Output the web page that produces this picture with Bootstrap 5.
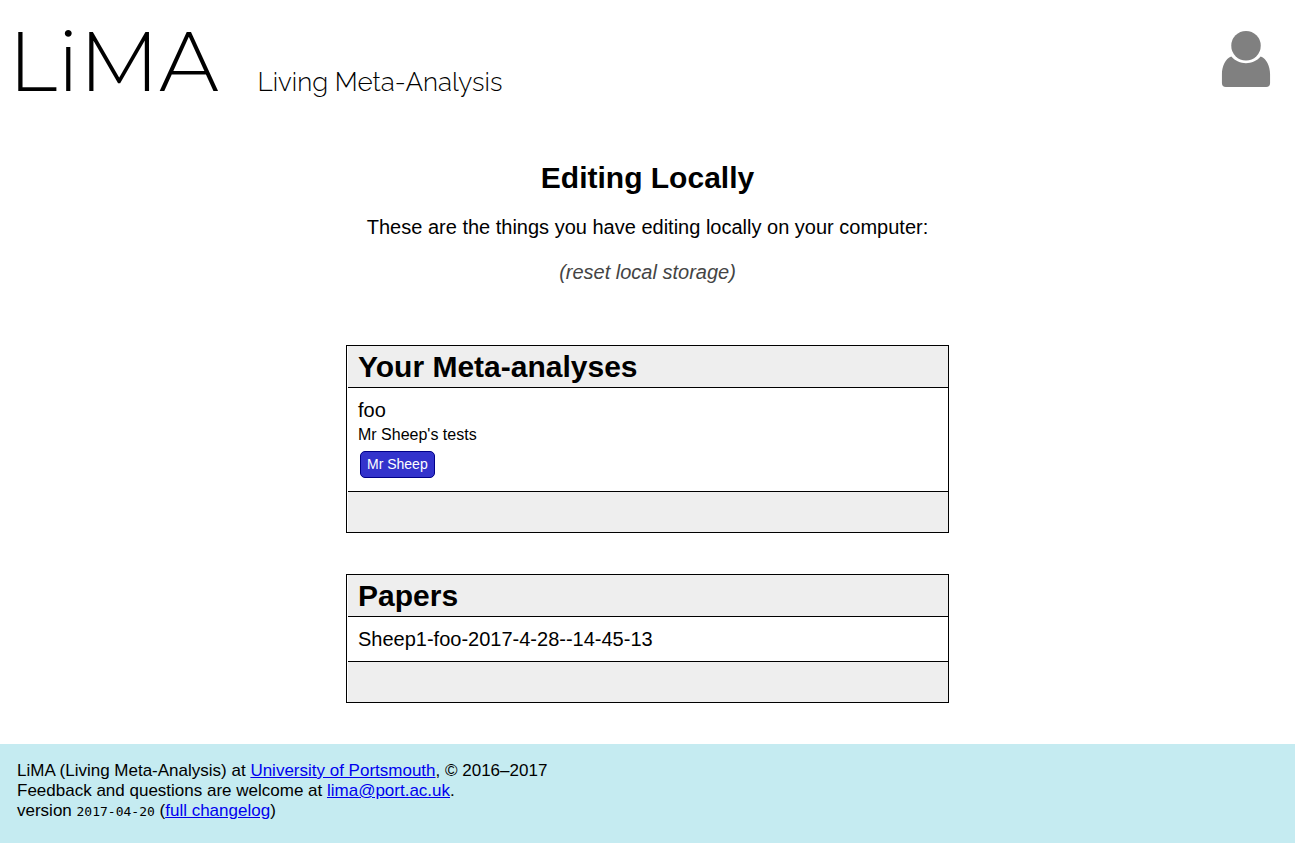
<!DOCTYPE html>
<html lang="en">
<head>
<meta charset="utf-8">
<meta name="viewport" content="width=device-width, initial-scale=1">
<title>LiMA: Editing Locally</title>
<link href="https://cdn.jsdelivr.net/npm/bootstrap@5.3.0/dist/css/bootstrap.min.css" rel="stylesheet">
<style>
body { font-family: "Liberation Sans", Arial, sans-serif; font-size: 20px; line-height: 24px; color: #000; }
h1, h2 { font-size: 30px; line-height: 36px; font-weight: 700; }
.site-header { padding: 13px 24px 0 8px; }
.site-logo { font: 300 84px/96px Montserrat, Lato, sans-serif; }
.brand { gap: 39px; }
.tagline { font: 300 26px/32px Raleway, Lato, sans-serif; }
.user-button { margin-top: 18px; }
.user-button svg { display: block; width: 50px; height: 56px; }
.intro { margin-top: 51px; }
.intro h1 { margin-bottom: 19px; }
.intro p { margin-bottom: 21px; }
.reset { color: #444; }
.lists { max-width: 603px; margin-top: 61px; gap: 41px; }
.listing { border: 1px solid #000; padding: 0 0 0 1px; }
.listing header { background: #eee; border-bottom: 1px solid #000; padding: 3px 10px 2px; }
.listing footer { background: #eee; border-top: 1px solid #000; height: 41px; }
.listing a { color: #000; }
.entry { padding: 10px; }
.about { font-size: 16px; line-height: 26px; }
.tag { font-size: 14px; line-height: 17px; color: #fff; background: #33c; border: 1px solid #008; border-radius: 5px; padding: 4px 6px; margin: 3px 2px; }
.site-footer { background: #c5ebf1; margin-top: 41px; padding: 17px 17px 22px; font-size: 17px; line-height: 20px; }
.site-footer a { color: #00e; }
.version { font: 13px/16px "DejaVu Sans Mono", monospace; }
</style>
</head>
<body>
<header class="site-header d-flex justify-content-between align-items-start">
  <div class="brand d-flex align-items-baseline">
    <a class="site-logo text-black text-decoration-none" href="#">LiMA</a>
    <span class="tagline">Living Meta-Analysis</span>
  </div>
  <button class="user-button btn p-0 border-0" type="button" aria-label="Account">
    <svg viewBox="0 0 50 57" fill="#808080" aria-hidden="true"><circle cx="25" cy="15" r="15"/><path d="M10 26c8 9 22 9 30 0c6 2 9.500 10 9.500 18v9q0 4-4 4h-41q-4 0-4-4v-9c0-8 3.500-16 9.500-18z"/></svg>
  </button>
</header>
<main class="container-fluid">
  <section class="intro text-center">
    <h1>Editing Locally</h1>
    <p>These are the things you have editing locally on your computer:</p>
    <a class="reset fst-italic text-decoration-none" href="#">(reset local storage)</a>
  </section>
  <div class="lists d-flex flex-column mx-auto">
    <section class="listing">
      <header><h2 class="mb-0">Your Meta-analyses</h2></header>
      <div class="entry">
        <a class="d-block text-decoration-none" href="#">foo</a>
        <p class="about mb-0">Mr Sheep's tests</p>
        <div class="d-flex"><span class="tag">Mr Sheep</span></div>
      </div>
      <footer></footer>
    </section>
    <section class="listing">
      <header><h2 class="mb-0">Papers</h2></header>
      <div class="entry"><a class="d-block text-decoration-none" href="#">Sheep1-foo-2017-4-28--14-45-13</a></div>
      <footer></footer>
    </section>
  </div>
</main>
<footer class="site-footer">
  <div>LiMA (Living Meta-Analysis) at <a href="#">University of Portsmouth</a>, © 2016–2017</div>
  <div>Feedback and questions are welcome at <a href="#">lima@port.ac.uk</a>.</div>
  <div>version <span class="version">2017-04-20</span> (<a href="#">full changelog</a>)</div>
</footer>
<script src="https://cdn.jsdelivr.net/npm/bootstrap@5.3.0/dist/js/bootstrap.bundle.min.js"></script>
</body>
</html>
